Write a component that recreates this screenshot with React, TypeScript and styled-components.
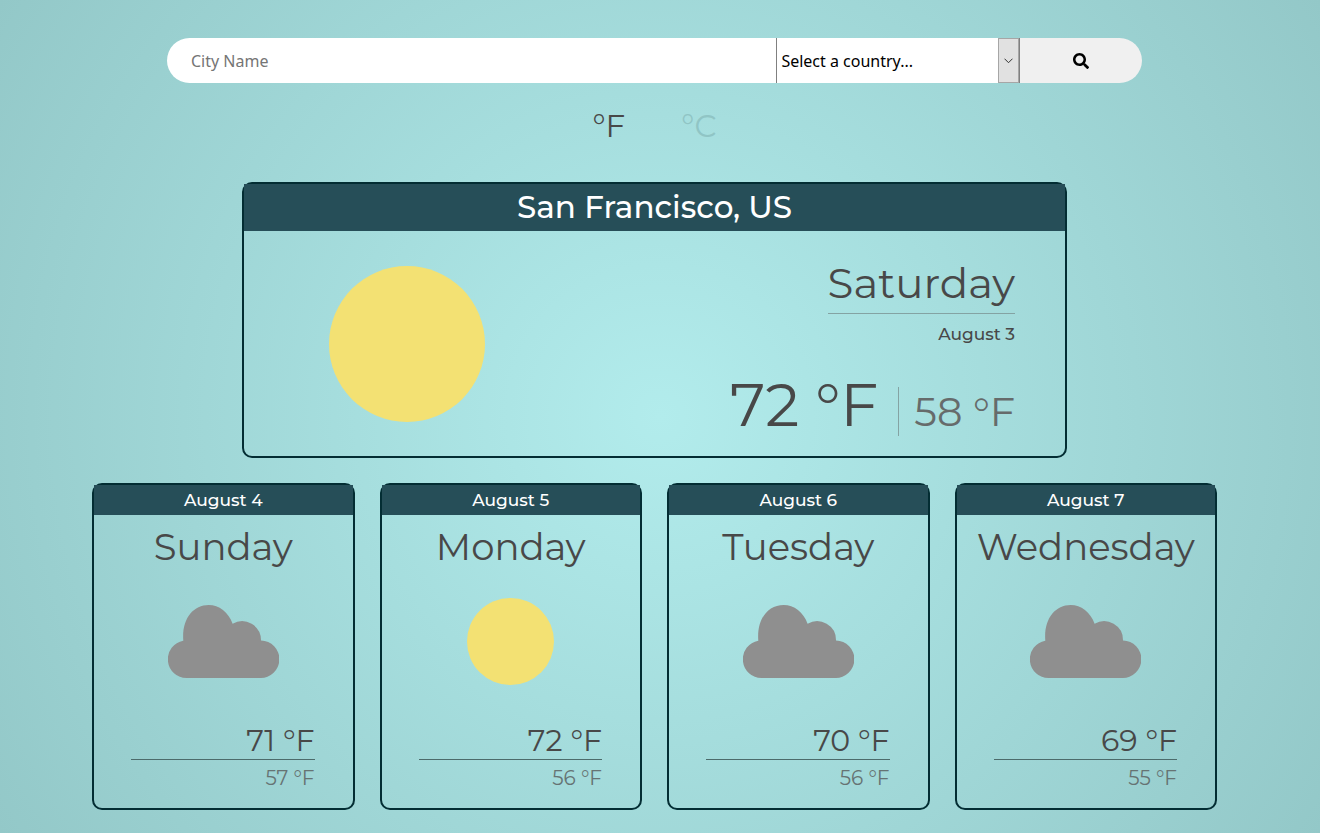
import React, { useState } from "react";
import styled, { createGlobalStyle } from "styled-components";
import { FaSearch } from "react-icons/fa";

const GlobalStyle = createGlobalStyle`
  *, *::before, *::after { box-sizing: border-box; }
  body {
    margin: 0;
    min-height: 100vh;
    background: radial-gradient(circle, #b2ecec, #93c8c8) no-repeat;
    color: #484848;
    font-family: Montserrat, Inter, sans-serif;
  }
  h1, h2, p { margin: 0; font-weight: 400; }
  button, input, select { font: inherit; color: inherit; }
`;

const Page = styled.main`
  display: flex;
  flex-direction: column;
  align-items: center;
  padding: 38px 103px 23px 92px;
`;

const SearchForm = styled.form`
  display: grid;
  grid-template-columns: 5fr 2fr 1fr;
  width: 100%;
  max-width: 975px;
  height: 45px;
  border-radius: 23px;
  overflow: hidden;
  color: #000;
  font-family: "Noto Sans", sans-serif;
  font-size: 16px;
`;

const CityInput = styled.input`
  min-width: 0;
  padding: 0 24px;
  border: 0;
  background: #fff;

  &::placeholder {
    color: #757575;
    opacity: 1;
  }
`;

const SelectBox = styled.div`
  position: relative;
  min-width: 0;
`;

const CountrySelect = styled.select`
  appearance: none;
  width: 100%;
  height: 100%;
  padding: 0 24px 0 4px;
  border: solid #808080;
  border-width: 0 1px;
  border-radius: 0;
  background: #fff;
`;

const SelectArrow = styled.span`
  position: absolute;
  top: 0;
  right: 1px;
  bottom: 0;
  display: flex;
  align-items: center;
  justify-content: center;
  width: 21px;
  border: 1px solid #a6a6a6;
  background: #e1e1e1;
  pointer-events: none;
`;

const SearchButton = styled.button`
  display: flex;
  align-items: center;
  justify-content: center;
  padding: 0;
  border: 0;
  background: #f0f0f0;
`;

const UnitToggle = styled.div`
  display: flex;
  justify-content: center;
  gap: 56px;
  margin: 25px 0 37px;
`;

const UnitButton = styled.button<{ $active: boolean }>`
  padding: 0;
  border: 0;
  background: none;
  color: ${(p) => (p.$active ? "#484848" : "#90c5c5")};
  font-size: 31px;
  line-height: 37px;
`;

const Card = styled.article`
  border: 2px solid #032d33;
  border-radius: 10px;
`;

const TodayCard = styled(Card)`
  width: 100%;
  max-width: 825px;
`;

const CardTitle = styled.h2<{ $large?: boolean }>`
  background: #264e58;
  color: #fff;
  text-align: center;
  font-weight: 500;
  font-size: ${(p) => (p.$large ? 31 : 17)}px;
  line-height: ${(p) => (p.$large ? 47 : 30)}px;
`;

const TodayBody = styled.div`
  display: flex;
  align-items: center;
  justify-content: space-between;
  min-height: 225px;
  padding: 0 50px 0 85px;
`;

const TodayInfo = styled.div`
  display: flex;
  flex-direction: column;
  align-items: flex-end;
`;

const TodayDay = styled.p`
  padding-top: 4px;
  border-bottom: 1px solid #84a3a3;
  font-size: 42px;
  line-height: 60px;
`;

const TodayDate = styled.p`
  margin-top: 8px;
  font-size: 17px;
  font-weight: 500;
  line-height: 24px;
`;

const TodayTemps = styled.div`
  display: flex;
  align-items: baseline;
  margin-top: 26px;
`;

const TodayHigh = styled.p`
  padding-right: 20px;
  font-size: 60px;
  line-height: 66px;
`;

const TodayLow = styled.p`
  padding-left: 15px;
  border-left: 1px solid #84a3a3;
  color: #666b6b;
  font-size: 40px;
  line-height: 49px;
`;

const Forecast = styled.section`
  display: grid;
  grid-template-columns: repeat(4, 1fr);
  gap: 25px;
  width: 100%;
  max-width: 1125px;
  margin-top: 25px;
`;

const DayName = styled.p`
  margin-top: 8px;
  text-align: center;
  font-size: 37px;
  line-height: 48px;
`;

const DayIcon = styled.div`
  display: flex;
  align-items: center;
  justify-content: center;
  height: 140px;
`;

const DayTemps = styled.div`
  padding: 13px 38px 15px 37px;
  text-align: right;
`;

const DayHigh = styled.p`
  padding-bottom: 1px;
  border-bottom: 1px solid #4c6b6b;
  font-size: 30px;
  line-height: 34px;
`;

const DayLow = styled.p`
  padding-top: 3px;
  color: #667373;
  font-size: 20px;
  line-height: 30px;
`;

const Sun = ({ size }: { size: number }) => (
  <svg width={size} height={size} viewBox="0 0 100 100" role="img" aria-label="Sunny">
    <circle cx="50" cy="50" r="50" fill="#f3e173" />
  </svg>
);

const Cloud = () => (
  <svg width="111" height="73" viewBox="0 0 111 73" role="img" aria-label="Cloudy">
    <path
      fill="#8f8f8f"
      d="M18.8 73A18.8 18.8 0 0 1 15.3 35.7C13.600 14 25 0 40.700 0C51 0 60.500 7 64.600 18.800A18.900 18.900 0 0 1 93 35.400A18.800 18.800 0 0 1 92.200 73Z"
    />
  </svg>
);

const days = [
  { date: "August 4", name: "Sunday", sky: "cloud", high: 71, low: 57 },
  { date: "August 5", name: "Monday", sky: "sun", high: 72, low: 56 },
  { date: "August 6", name: "Tuesday", sky: "cloud", high: 70, low: 56 },
  { date: "August 7", name: "Wednesday", sky: "cloud", high: 69, low: 55 },
];

type Unit = "F" | "C";

export default function App() {
  const [unit, setUnit] = useState<Unit>("F");
  const temp = (f: number) => `${unit === "F" ? f : Math.round(((f - 32) * 5) / 9)} °${unit}`;

  return (
    <>
      <GlobalStyle />
      <Page>
        <SearchForm onSubmit={(e) => e.preventDefault()}>
          <CityInput type="text" placeholder="City Name" aria-label="City name" />
          <SelectBox>
            <CountrySelect aria-label="Country" defaultValue="">
              <option value="">Select a country...</option>
              <option value="US">United States</option>
            </CountrySelect>
            <SelectArrow>
              <svg width="9" height="6" viewBox="0 0 9 6" fill="none" stroke="#333" aria-hidden="true">
                <path d="M0.5 0.7L4.5 4.7L8.5 0.7" />
              </svg>
            </SelectArrow>
          </SelectBox>
          <SearchButton type="submit" aria-label="Search">
            <FaSearch size={16} />
          </SearchButton>
        </SearchForm>

        <UnitToggle>
          {(["F", "C"] as Unit[]).map((u) => (
            <UnitButton key={u} type="button" $active={unit === u} onClick={() => setUnit(u)}>
              °{u}
            </UnitButton>
          ))}
        </UnitToggle>

        <TodayCard>
          <CardTitle as="h1" $large>San Francisco, US</CardTitle>
          <TodayBody>
            <Sun size={156} />
            <TodayInfo>
              <TodayDay>Saturday</TodayDay>
              <TodayDate>August 3</TodayDate>
              <TodayTemps>
                <TodayHigh>{temp(72)}</TodayHigh>
                <TodayLow>{temp(58)}</TodayLow>
              </TodayTemps>
            </TodayInfo>
          </TodayBody>
        </TodayCard>

        <Forecast>
          {days.map((d) => (
            <Card key={d.name}>
              <CardTitle>{d.date}</CardTitle>
              <DayName>{d.name}</DayName>
              <DayIcon>{d.sky === "sun" ? <Sun size={87} /> : <Cloud />}</DayIcon>
              <DayTemps>
                <DayHigh>{temp(d.high)}</DayHigh>
                <DayLow>{temp(d.low)}</DayLow>
              </DayTemps>
            </Card>
          ))}
        </Forecast>
      </Page>
    </>
  );
}
